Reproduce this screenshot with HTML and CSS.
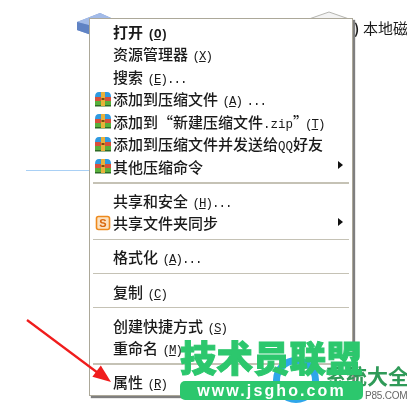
FILE: index.html
```html
<!DOCTYPE html>
<html lang="zh-CN">
<head>
    <meta charset="UTF-8">
    <meta name="viewport" content="width=device-width, initial-scale=1.0">
    <title>属性</title>
    <link rel="stylesheet" href="styles.css">
</head>
<body>
    <div class="desktop">
        <!-- drive icons behind the menu -->
        <svg class="drive drive-blue" viewBox="0 0 46 26" width="46" height="26">
            <path d="M1 10 L24 1 L44 10 L44 22 L24 26 L1 18 Z" fill="#7d9bd6"/>
            <path d="M1 10 L24 1 L44 10 L24 16 Z" fill="#a3bbe8"/>
            <path d="M1 10 L24 16 L24 26 L1 18 Z" fill="#6083c4"/>
        </svg>
        <svg class="drive drive-white" viewBox="0 0 50 10" width="50" height="10">
            <path d="M2 9 L25 1 L48 9" fill="#f4f4f4" stroke="#b5b5b0"/>
        </svg>
        <span class="paren">)</span>
        <span class="drive-label">本地磁盘</span>
        <div class="blue-line"></div>

        <div class="menu">
            <div class="item default"><span class="label">打开<span class="lat key"> (<u>O</u>)</span></span></div>
            <div class="item"><span class="label">资源管理器<span class="lat key"> (<u>X</u>)</span></span></div>
            <div class="item"><span class="label">搜索<span class="lat key"> (<u>E</u>)...</span></span></div>
            <div class="item">
                <svg class="icon" viewBox="0 0 16 16"><use href="#rar"/></svg>
                <span class="label">添加到压缩文件<span class="lat key"> (<u>A</u>) ...</span></span>
            </div>
            <div class="item">
                <svg class="icon" viewBox="0 0 16 16"><use href="#rar"/></svg>
                <span class="label">添加到“新建压缩文件<span class="lat">.zip</span>”<span class="lat key tight">(<u>T</u>)</span></span>
            </div>
            <div class="item">
                <svg class="icon" viewBox="0 0 16 16"><use href="#rar"/></svg>
                <span class="label">添加到压缩文件并发送给<span class="lat">QQ</span>好友</span>
            </div>
            <div class="item">
                <svg class="icon" viewBox="0 0 16 16"><use href="#rar"/></svg>
                <span class="label">其他压缩命令</span>
                <span class="more"></span>
            </div>
            <div class="sep"></div>
            <div class="item"><span class="label">共享和安全<span class="lat key"> (<u>H</u>)...</span></span></div>
            <div class="item">
                <svg class="icon" viewBox="0 0 16 16">
                    <rect x="1.5" y="1.5" width="13" height="13" rx="2" fill="#fbe3c4" stroke="#ee8a1e" stroke-width="1.6"/>
                    <text x="8" y="12" class="s-mark">S</text>
                </svg>
                <span class="label">共享文件夹同步</span>
                <span class="more"></span>
            </div>
            <div class="sep"></div>
            <div class="item"><span class="label">格式化<span class="lat key"> (<u>A</u>)...</span></span></div>
            <div class="sep"></div>
            <div class="item"><span class="label">复制<span class="lat key"> (<u>C</u>)</span></span></div>
            <div class="sep"></div>
            <div class="item"><span class="label">创建快捷方式<span class="lat key"> (<u>S</u>)</span></span></div>
            <div class="item"><span class="label">重命名<span class="lat key"> (<u>M</u>)</span></span></div>
            <div class="sep"></div>
            <div class="item"><span class="label">属性<span class="lat key"> (<u>R</u>)</span></span></div>
        </div>

        <svg class="arrow" viewBox="0 0 90 70" width="90" height="70">
            <path d="M1 1 L72 54" stroke="#f01c1c" stroke-width="2.2" fill="none"/>
            <path d="M85 63 L66.4 57.8 L74.8 46.6 Z" fill="#f01c1c"/>
        </svg>

        <div class="caption">错误，提示您的“属性”对话框中</div>

        <!-- site watermark -->
        <div class="ring"></div>
        <div class="wm-sub">系统大全</div>
        <div class="wm-site">P85.COM</div>
        <div class="wm-title">技术员联盟</div>
        <div class="wm-url">www.jsgho.com</div>
    </div>

    <svg class="defs" width="0" height="0">
        <symbol id="rar" viewBox="0 0 16 16">
            <path d="M0 6 Q0 1 4 1 H12 Q16 1 16 6 Z" fill="#2f9ae0"/>
            <rect y="6" width="16" height="4" fill="#d8503a"/>
            <rect y="10" width="16" height="4" fill="#58b03c"/>
            <rect y="14" width="16" height="1.5" fill="#2d6b25"/>
            <rect x="6" y="1" width="4" height="14" fill="#e8b13a"/>
            <rect x="6.5" y="7" width="3" height="2" fill="#7a4a12"/>
        </symbol>
    </svg>
</body>
</html>
```

FILE: styles.css
```css
html, body {
    margin: 0;
    padding: 0;
    background-color: #fff;
}
.desktop {
    position: relative;
    width: 407px;
    height: 406px;
    overflow: hidden;
    font-family: "Noto Sans CJK SC", "Liberation Sans", sans-serif;
    color: #1a1a1a;
    filter: blur(0.35px);
}
.defs {
    position: absolute;
}

/* things behind the menu */
.drive {
    position: absolute;
}
.drive-blue {
    left: 76px;
    top: 12px;
}
.drive-white {
    left: 304px;
    top: 11px;
}
.paren {
    position: absolute;
    left: 354px;
    top: 18px;
    font-size: 14px;
    font-weight: 700;
}
.drive-label {
    position: absolute;
    left: 363px;
    top: 17px;
    font-size: 15px;
    line-height: 22px;
    white-space: nowrap;
}
.blue-line {
    position: absolute;
    left: 26px;
    top: 170px;
    width: 64px;
    height: 1px;
    background-color: #a9d0f5;
}

/* context menu */
.menu {
    position: absolute;
    left: 89px;
    top: 18px;
    width: 264px;
    height: 378px;
    padding-top: 1px;
    box-sizing: border-box;
    display: flex;
    flex-direction: column;
    background-color: #fff;
    border: 1px solid #aca899;
    box-shadow: 2px 2px 1px #7f7f7f;
}
.item {
    display: flex;
    align-items: center;
    height: 22.5px;
    flex: none;
    font-size: 15px;
    font-weight: 500;
    position: relative;
    padding-left: 23px;
}
.item .label {
    white-space: nowrap;
}
.lat {
    font-family: "Liberation Mono", monospace;
    font-size: 12.5px;
    white-space: pre;
}
/* access key part, narrower than the plain latin text */
.key {
    letter-spacing: -1px;
    word-spacing: -2px;
}
.tight {
    margin-left: -3px;
}
.item.default {
    font-weight: 700;
}
.icon {
    position: absolute;
    left: 5px;
    top: 3px;
    width: 16px;
    height: 16px;
}
.s-mark {
    font-family: "Liberation Sans", sans-serif;
    font-size: 11px;
    font-weight: 700;
    fill: #d9670c;
    text-anchor: middle;
}
.more {
    position: absolute;
    right: 9px;
    top: 6px;
    border-left: 5px solid #111;
    border-top: 4.5px solid transparent;
    border-bottom: 4.5px solid transparent;
}
.sep {
    flex: none;
    height: 1.5px;
    margin: 4.6px 3px 5.5px;
    background-color: #c5c2b5;
}

.arrow {
    position: absolute;
    left: 26px;
    top: 319px;
}
.caption {
    position: absolute;
    left: 9px;
    top: 403px;
    font-size: 15px;
    line-height: 20px;
    letter-spacing: 0.5px;
    white-space: nowrap;
}

/* watermark */
.ring {
    position: absolute;
    left: 273px;
    top: 357px;
    width: 32px;
    height: 32px;
    border: 7px solid #2ea6ea;
    border-radius: 50%;
}
.wm-sub {
    position: absolute;
    left: 325px;
    top: 362px;
    font-size: 21px;
    line-height: 26px;
    font-weight: 700;
    color: #2f9a58;
    white-space: nowrap;
}
.wm-site {
    position: absolute;
    left: 365px;
    top: 389px;
    font-family: "Liberation Sans", sans-serif;
    font-size: 10px;
    line-height: 13px;
    letter-spacing: -0.2px;
    color: #666;
}
.wm-title {
    position: absolute;
    left: 180px;
    top: 333px;
    font-size: 36.5px;
    line-height: 48px;
    font-weight: 900;
    color: #2cc76d;
    -webkit-text-stroke: 1px #2cc76d;
    white-space: nowrap;
}
.wm-url {
    position: absolute;
    left: 180px;
    top: 381px;
    width: 183px;
    height: 19px;
    border-radius: 5px;
    background-color: #2cc76d;
    color: #fff;
    font-family: "Liberation Sans", sans-serif;
    font-size: 16px;
    font-weight: 700;
    line-height: 19px;
    letter-spacing: 2.1px;
    text-align: center;
    white-space: nowrap;
}
```
